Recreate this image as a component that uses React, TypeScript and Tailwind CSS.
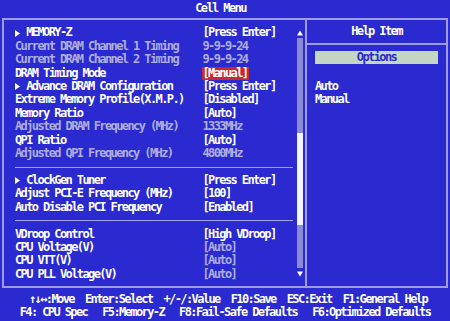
import React from "react";

type Row =
    | { sep: true }
    | { sep?: false; label: string; value: string; arrow?: boolean; dim?: boolean; dimValue?: boolean; hl?: boolean };

const rows: Row[] = [
    { label: "MEMORY-Z", value: "[Press Enter]", arrow: true },
    { label: "Current DRAM Channel 1 Timing", value: "9-9-9-24", dim: true },
    { label: "Current DRAM Channel 2 Timing", value: "9-9-9-24", dim: true },
    { label: "DRAM Timing Mode", value: "[Manual]", hl: true },
    { label: "Advance DRAM Configuration", value: "[Press Enter]", arrow: true },
    { label: "Extreme Memory Profile(X.M.P.)", value: "[Disabled]" },
    { label: "Memory Ratio", value: "[Auto]" },
    { label: "Adjusted DRAM Frequency (MHz)", value: "1333MHz", dim: true },
    { label: "QPI Ratio", value: "[Auto]" },
    { label: "Adjusted QPI Frequency (MHz)", value: "4800MHz", dim: true },
    { sep: true },
    { label: "ClockGen Tuner", value: "[Press Enter]", arrow: true },
    { label: "Adjust PCI-E Frequency (MHz)", value: "[100]" },
    { label: "Auto Disable PCI Frequency", value: "[Enabled]" },
    { sep: true },
    { label: "VDroop Control", value: "[High VDroop]" },
    { label: "CPU Voltage(V)", value: "[Auto]", dimValue: true },
    { label: "CPU VTT(V)", value: "[Auto]", dimValue: true },
    { label: "CPU PLL Voltage(V)", value: "[Auto]", dimValue: true },
];

function Tri({ down }: { down?: boolean }) {
    return (
        <svg width="6" height="6" viewBox="0 0 6 6" className="block">
            <path d={down ? "M0 0.5H6L3 5.5Z" : "M0 5.5H6L3 0.5Z"} fill="#ffffff" />
        </svg>
    );
}

function SettingRow({ row }: { row: Row }) {
    if (row.sep) {
        return (
            <div className="h-[13.43px] flex items-center">
                <div className="w-full h-px bg-[#a0a0ec]" />
            </div>
        );
    }
    const labelColor = row.dim ? "text-[#aeaee0]" : "text-white";
    const valueColor = row.dim || row.dimValue ? "text-[#aeaee0]" : "text-white";
    return (
        <div className="h-[13.43px] grid grid-cols-[187.5px_1fr] items-center whitespace-pre">
            <div className={`flex items-center ${labelColor}`}>
                {row.arrow && (
                    <span className="inline-flex w-[11.25px] items-center">
                        <svg width="5" height="7" viewBox="0 0 5 7">
                            <path d="M0 0L5 3.5L0 7Z" fill="#ffffff" />
                        </svg>
                    </span>
                )}
                <span>{row.label}</span>
            </div>
            <div className="flex">
                <span className={row.hl ? "bg-[#c42a2e] text-white px-[1px] -ml-[1px]" : valueColor}>
                    {row.value}
                </span>
            </div>
        </div>
    );
}

export default function App() {
    return (
        <div
            className="w-[450px] h-[321px] bg-[#2a2ad0] text-white font-bold text-[12px] leading-[13.43px] tracking-[-1.6px] flex flex-col overflow-hidden"
            style={{ fontFamily: '"DejaVu Sans Mono", "Liberation Mono", monospace' }}
        >
            <div className="h-[18px] flex items-center justify-center pb-[1px] pr-[9px]">Cell Menu</div>

            <div className="mx-[2px] h-[270px] border-2 border-[#9c9ce8] flex">
                {/* settings list */}
                <div className="w-[301px] flex pl-[11px]">
                    <div className="w-[278px] pt-[6.3px]">
                        {rows.map((r, i) => (
                            <SettingRow key={i} row={r} />
                        ))}
                    </div>
                    <div className="ml-[4px] w-[6px] pt-[10px] flex flex-col items-center">
                        <Tri />
                        <div className="mt-[2px] w-[6px] h-[230px] flex flex-col">
                            <div className="h-[95px] bg-[#8a8ad8]" />
                            <div className="h-[92px] bg-[#f4f4ff]" />
                            <div className="flex-1 bg-[#8a8ad8]" />
                        </div>
                        <div className="mt-[3px]">
                            <Tri down />
                        </div>
                    </div>
                </div>

                {/* help panel */}
                <div className="flex-1 border-l-2 border-[#9c9ce8] flex flex-col">
                    <div className="h-[25px] flex items-center justify-center border-b-2 border-[#9c9ce8]">
                        Help Item
                    </div>
                    <div className="mx-[8px] mt-[6px] h-[13px] bg-[#c4d6c4] text-[#2a2ad0] flex items-center justify-center">
                        Options
                    </div>
                    <div className="pl-[8px] mt-[15.5px]">
                        <div className="h-[13.43px]">Auto</div>
                        <div className="h-[13.43px]">Manual</div>
                    </div>
                </div>
            </div>

            <div className="pt-[5px] flex flex-col whitespace-pre">
                <div className="h-[13.43px] flex justify-center gap-[11px] pl-[6px]">
                    <span>↑↓↔:Move</span>
                    <span>Enter:Select</span>
                    <span>+/-/:Value</span>
                    <span>F10:Save</span>
                    <span>ESC:Exit</span>
                    <span>F1:General Help</span>
                </div>
                <div className="h-[13.43px] flex justify-center gap-[15px]">
                    <span>F4: CPU Spec</span>
                    <span>F5:Memory-Z</span>
                    <span>F8:Fail-Safe Defaults</span>
                    <span>F6:Optimized Defaults</span>
                </div>
            </div>
        </div>
    );
}
